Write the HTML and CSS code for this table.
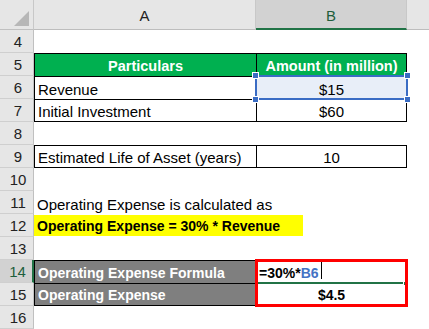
FILE: index.html
```html
<!DOCTYPE html>
<html>
<head>
<meta charset="utf-8">
<link rel="stylesheet" href="styles.css">
</head>
<body>
<div class="sheet">
  <div class="corner"><svg width="15" height="15" viewBox="0 0 15 15"><polygon points="15,0 15,15 0,15" fill="#b7b7b7"/></svg></div>
  <div class="colhead">A</div>
  <div class="colhead sel">B</div>
  <div class="colhead rest"></div>

  <div class="rn">4</div><div class="c"></div><div class="c"></div><div class="c"></div>

  <div class="rn">5</div>
  <div class="c t l green center bold">Particulars</div>
  <div class="c t l r green center bold">Amount (in million)</div>
  <div class="c"></div>

  <div class="rn">6</div>
  <div class="c t l">Revenue</div>
  <div class="c t l r center selfill">$15</div>
  <div class="c"></div>

  <div class="rn">7</div>
  <div class="c t l b">Initial Investment</div>
  <div class="c t l r b center">$60</div>
  <div class="c"></div>

  <div class="rn">8</div><div class="c"></div><div class="c"></div><div class="c"></div>

  <div class="rn">9</div>
  <div class="c t l b">Estimated Life of Asset (years)</div>
  <div class="c t l r b center">10</div>
  <div class="c"></div>

  <div class="rn">10</div><div class="c"></div><div class="c"></div><div class="c"></div>

  <div class="rn">11</div>
  <div class="c">Operating Expense is calculated as</div>
  <div class="c"></div><div class="c"></div>

  <div class="rn">12</div>
  <div class="c hlcell"><span class="hl bold">Operating Expense = 30% * Revenue</span></div>
  <div class="c"></div><div class="c"></div>

  <div class="rn">13</div><div class="c"></div><div class="c"></div><div class="c"></div>

  <div class="rn selrow">14</div>
  <div class="c t l grey bold">Operating Expense Formula</div>
  <div class="c t l r formula bold">=30%*<span class="ref">B6</span><span class="caret"></span></div>
  <div class="c"></div>

  <div class="rn">15</div>
  <div class="c t l b grey bold">Operating Expense</div>
  <div class="c t l r b center bold">$4.5</div>
  <div class="c"></div>

  <div class="rn">16</div><div class="c"></div><div class="c"></div><div class="c"></div>

  <div class="selbox">
    <span class="h h1"></span><span class="h h2"></span><span class="h h3"></span><span class="h h4"></span>
  </div>
  <div class="editline"><span class="fill"></span></div>
  <div class="redbox"></div>
</div>
</body>
</html>
```

FILE: styles.css
```css
html, body {
  margin: 0;
  padding: 0;
  background: #fff;
}
body {
  font-family: "Liberation Sans", Arial, sans-serif;
  font-size: 15px;
  color: #000;
}
.sheet {
  position: relative;
  width: 429px;
  height: 329px;
  overflow: hidden;
  display: grid;
  grid-template-columns: 34px 222px 151px 22px;
  grid-template-rows: 30px repeat(13, 23px);
}
.corner {
  background: #e6e6e6;
  border-right: 1px solid #c8c8c8;
  border-bottom: 1px solid #c0c0c0;
  box-sizing: border-box;
  display: flex;
  justify-content: flex-end;
  align-items: flex-end;
  padding: 0 4px 3px 0;
}
.corner svg { display: block; }
.colhead {
  background: #e6e6e6;
  border-right: 1px solid #c8c8c8;
  border-bottom: 1px solid #bdbdbd;
  box-sizing: border-box;
  display: flex;
  align-items: flex-end;
  justify-content: center;
  padding-bottom: 5px;
  font-size: 15px;
  color: #222;
}
.colhead.sel {
  background: #d2d2d2;
  border-bottom: 2px solid #217346;
  color: #1e5e3c;
  padding-bottom: 4px;
}
.colhead.rest { border-right: none; }
.rn {
  background: #e6e6e6;
  border-right: 1px solid #c0c0c0;
  border-bottom: 1px solid #cfcfcf;
  box-sizing: border-box;
  display: flex;
  align-items: flex-end;
  justify-content: center;
  padding: 0 0 2px 3px;
  font-size: 15px;
  color: #222;
  line-height: 17px;
}
.rn.selrow {
  background: #d2d2d2;
  border-right: 2px solid #217346;
  color: #1e5e3c;
}
.c {
  box-sizing: border-box;
  display: flex;
  align-items: flex-end;
  padding: 0 3px 1px 3px;
  line-height: 17px;
  white-space: nowrap;
  overflow: visible;
  min-width: 0;
}
.t { border-top: 1px solid #000; }
.l { border-left: 1px solid #000; }
.r { border-right: 1px solid #000; }
.b { border-bottom: 1px solid #000; }
.center { justify-content: center; }
.bold { font-weight: bold; font-size: 14px; }
.green {
  background: #00b050;
  color: #fff;
}
.green.bold { font-size: 14.5px; }
.grey {
  background: #7f7f7f;
  color: #fff;
}
.selfill { background: #e8eef8; }
.hlcell { padding: 1px 0 1px 0; align-items: stretch; }
.hl {
  display: flex;
  align-items: flex-end;
  width: 269px;
  flex: none;
  background: #ffff00;
  padding: 0 3px 1px 3px;
  box-sizing: border-box;
}
.formula { padding-left: 2px; }
.ref { color: #4472c4; }
.caret {
  display: inline-block;
  width: 1px;
  height: 18px;
  background: #000;
  margin-left: 2px;
  align-self: stretch;
}
.selbox {
  position: absolute;
  grid-column: 3 / 4;
  grid-row: 4 / 5;
  top: -1px; left: -1px; right: -1px; bottom: -1px;
  border: 2px solid #3a6cc4;
  z-index: 2;
}
.h {
  position: absolute;
  width: 5px;
  height: 5px;
  background: #3a6cc4;
  border: 1px solid #fff;
}
.h1 { left: -5px; top: -5px; }
.h2 { right: -5px; top: -5px; }
.h3 { left: -5px; bottom: -5px; }
.h4 { right: -5px; bottom: -5px; }
.editline {
  position: absolute;
  grid-column: 3 / 4;
  grid-row: 12 / 13;
  left: 2px; right: 1px; bottom: -1px;
  height: 2px;
  background: #217346;
  z-index: 2;
}
.fill {
  position: absolute;
  right: -2px;
  top: -1px;
  width: 3px;
  height: 3px;
  background: #217346;
  border: 1px solid #fff;
}
.redbox {
  position: absolute;
  grid-column: 3 / 4;
  grid-row: 12 / 14;
  top: -1px; left: -1px; right: -1px; bottom: -1px;
  border: 3px solid #ff0000;
  z-index: 3;
}
```
